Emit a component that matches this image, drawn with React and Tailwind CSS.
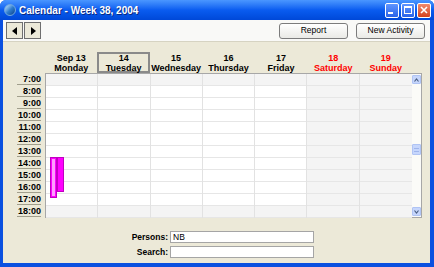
import React from 'react';

const days = [
  { date: 'Sep 13', name: 'Monday' },
  { date: '14', name: 'Tuesday', selected: true },
  { date: '15', name: 'Wednesday' },
  { date: '16', name: 'Thursday' },
  { date: '17', name: 'Friday' },
  { date: '18', name: 'Saturday', weekend: true },
  { date: '19', name: 'Sunday', weekend: true },
];

const hours = ['7:00', '8:00', '9:00', '10:00', '11:00', '12:00', '13:00', '14:00', '15:00', '16:00', '17:00', '18:00'];

const font = { fontFamily: '"Liberation Sans", Arial, sans-serif' };

const TitleButton = ({ children, close }) => (
  <div
    className={`w-[14px] h-[15px] rounded-[2px] border border-white flex items-center justify-center ${
      close ? 'bg-gradient-to-b from-[#f08a6c] to-[#d4401a]' : 'bg-gradient-to-b from-[#5f95ff] to-[#2a63e8]'
    }`}
  >
    {children}
  </div>
);

const XpButton = ({ children }) => (
  <div className="w-[69px] h-[16px] rounded-[3px] border border-[#7c7c7c] bg-gradient-to-b from-[#ffffff] to-[#eaeae6] flex items-center justify-center text-[8.5px] text-black">
    {children}
  </div>
);

const App = () => {
  return (
    <div className="w-[434px] h-[267px] bg-[#0a50e0] flex flex-col overflow-hidden rounded-t-[6px]" style={font}>
      {/* Title bar */}
      <div className="h-[20px] flex items-center bg-gradient-to-b from-[#4a96ff] via-[#0a5cf0] to-[#0048d8] px-[4px] shrink-0">
        <div className="w-[12px] h-[12px] rounded-full bg-gradient-to-br from-[#c4e6ff] via-[#2f7fd0] to-[#0b3f8a] border border-[#6fa8e0]" />
        <span className="ml-[3px] text-white font-bold text-[10px] [text-shadow:1px_1px_0_#0a2a80]">
          Calendar - Week 38, 2004
        </span>
        <div className="ml-auto flex gap-[2px] mr-[-1px]">
          <TitleButton>
            <div className="w-[5px] h-[2px] bg-white mt-[6px] mr-[3px]" />
          </TitleButton>
          <TitleButton>
            <div className="w-[8px] h-[8px] border border-white border-t-2" />
          </TitleButton>
          <TitleButton close>
            <svg width="8" height="8" viewBox="0 0 8 8">
              <path d="M1 1 L7 7 M7 1 L1 7" stroke="white" strokeWidth="1.6" />
            </svg>
          </TitleButton>
        </div>
      </div>

      <div className="flex-1 flex flex-col mx-[3px] mr-[4px] mb-[4px] bg-[#ece9d8]">
        {/* Toolbar */}
        <div className="h-[22px] bg-[#f9f9f7] border-b border-[#d6d3c2] flex items-center pl-[3px] pr-[5px] shrink-0">
          <div className="flex">
            <div className="w-[17px] h-[17px] border border-[#6f6f6f] bg-[#ece9d8] flex items-center justify-center">
              <svg width="6" height="8" viewBox="0 0 6 8"><path d="M5 0 L0 4 L5 8 Z" fill="black" /></svg>
            </div>
            <div className="w-[17px] h-[17px] border border-[#6f6f6f] bg-[#ece9d8] flex items-center justify-center ml-[1px]">
              <svg width="6" height="8" viewBox="0 0 6 8"><path d="M1 0 L6 4 L1 8 Z" fill="black" /></svg>
            </div>
          </div>
          <div className="ml-auto flex gap-[8px]">
            <XpButton>Report</XpButton>
            <XpButton>New Activity</XpButton>
          </div>
        </div>

        {/* Day headers */}
        <div className="h-[31px] flex shrink-0">
          <div className="w-[42px]" />
          <div className="w-[367px] grid grid-cols-7">
            {days.map((d) => (
              <div key={d.name} className="flex flex-col justify-end">
                <div
                  className={`h-[21px] flex flex-col items-center justify-center text-[9px] font-bold leading-[10px] ${
                    d.selected ? 'border-2 border-[#8a8a8a]' : ''
                  } ${d.weekend ? 'text-[#ff0000]' : 'text-black'}`}
                >
                  <span>{d.date}</span>
                  <span>{d.name}</span>
                </div>
              </div>
            ))}
          </div>
        </div>

        {/* Time grid */}
        <div className="h-[145px] flex shrink-0">
          <div className="w-[42px] flex flex-col items-end pr-[4px]">
            {hours.map((h) => (
              <div
                key={h}
                className="h-[12px] w-[24px] border-b border-[#a19e8c] text-right text-[9px] font-bold leading-[12px] text-black"
              >
                {h}
              </div>
            ))}
          </div>
          <div className="w-[377px] flex border-t border-l border-b border-r border-[#a7a7a7]">
            <div className="relative w-[366px] grid grid-cols-7 bg-white">
              {days.map((d, ci) => (
                <div key={d.name} className={`flex flex-col ${ci < 6 ? 'border-r border-[#e2e2e2]' : ''}`}>
                  {hours.map((h, ri) => (
                    <div
                      key={h}
                      className={`h-[12px] border-b border-[#e6e6e6] ${
                        d.weekend || ri === 0 || ri === 11 ? 'bg-[#f4f4f4]' : 'bg-white'
                      }`}
                    />
                  ))}
                </div>
              ))}
              {/* Activities */}
              <div className="absolute left-[4px] top-[83px] w-[7px] h-[41px] bg-[#ff00ff] border border-[#c000c0] p-[1px]">
                <div className="w-full h-full bg-[#ff9cff]" />
              </div>
              <div className="absolute left-[11px] top-[83px] w-[7px] h-[35px] bg-[#ff00ff] border border-[#c000c0]" />
            </div>
            {/* Scrollbar */}
            <div className="w-[9px] bg-[#fbfbf8] flex flex-col items-center py-[1px]">
              <div className="w-[9px] h-[9px] rounded-[1px] bg-[#c6d6fc] border border-[#b0c4f4] flex items-center justify-center">
                <svg width="5" height="4" viewBox="0 0 5 4"><path d="M0.5 3.5 L2.5 1 L4.5 3.5" stroke="#4d6185" strokeWidth="1.2" fill="none" /></svg>
              </div>
              <div className="mt-[60px] w-[9px] h-[11px] rounded-[1px] bg-[#c6d6fc] border border-[#b0c4f4] flex items-center justify-center">
                <div className="w-[5px] h-[4px] border-t border-b border-[#9fb5ec]" />
              </div>
              <div className="mt-auto w-[9px] h-[9px] rounded-[1px] bg-[#c6d6fc] border border-[#b0c4f4] flex items-center justify-center">
                <svg width="5" height="4" viewBox="0 0 5 4"><path d="M0.5 0.5 L2.5 3 L4.5 0.5" stroke="#4d6185" strokeWidth="1.2" fill="none" /></svg>
              </div>
            </div>
          </div>
        </div>

        {/* Filters */}
        <div className="flex flex-col items-start pl-[122px] pt-[13px] gap-[2px]">
          <div className="flex items-center">
            <span className="w-[45px] text-right text-[8.5px] font-bold text-black pr-[2px]">Persons:</span>
            <div className="w-[144px] h-[12px] bg-white border border-[#a5a5a5] text-[8.5px] leading-[10px] pl-[2px] text-black">NB</div>
          </div>
          <div className="flex items-center">
            <span className="w-[45px] text-right text-[8.5px] font-bold text-black pr-[2px]">Search:</span>
            <div className="w-[144px] h-[12px] bg-white border border-[#a5a5a5]" />
          </div>
        </div>
      </div>
    </div>
  );
};

export default App;
